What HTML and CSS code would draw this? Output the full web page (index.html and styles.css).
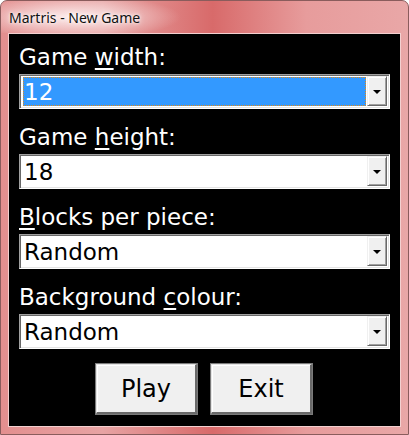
FILE: index.html
```html
<!DOCTYPE html>
<html>
<head>
    <title>Martris - New Game</title>
    <link rel="stylesheet" href="styles.css">
</head>
<body>
    <div class="window">
        <div class="titlebar">
            <span class="title">Martris - New Game</span>
        </div>

        <div class="client">
            <!-- Game width -->
            <div class="field">
                <label class="label">Game <u>w</u>idth:</label>
                <div class="combo focused">
                    <div class="value"><span>12</span></div>
                    <div class="drop"><span class="arrow"></span></div>
                </div>
            </div>

            <!-- Game height -->
            <div class="field">
                <label class="label">Game <u>h</u>eight:</label>
                <div class="combo">
                    <div class="value"><span>18</span></div>
                    <div class="drop"><span class="arrow"></span></div>
                </div>
            </div>

            <!-- Blocks per piece -->
            <div class="field">
                <label class="label"><u>B</u>locks per piece:</label>
                <div class="combo">
                    <div class="value"><span>Random</span></div>
                    <div class="drop"><span class="arrow"></span></div>
                </div>
            </div>

            <!-- Background colour -->
            <div class="field">
                <label class="label">Background <u>c</u>olour:</label>
                <div class="combo">
                    <div class="value"><span>Random</span></div>
                    <div class="drop"><span class="arrow"></span></div>
                </div>
            </div>

            <div class="buttons">
                <button class="btn">Play</button>
                <button class="btn">Exit</button>
            </div>
        </div>
    </div>
</body>
</html>
```

FILE: styles.css
```css
html, body {
    margin: 0;
    padding: 0;
    background: #ffffff;
}

.window {
    width: 409px;
    height: 435px;
    box-sizing: border-box;
    border: 1px solid #8a5c5c;
    border-radius: 7px 7px 0 0;
    background:
        linear-gradient(90deg, #e38f8f 0%, #e7a3a3 25%, #d86a6a 52%, #e79c9c 75%, #e9a7a7 100%);
    padding: 0 7px 7px 7px;
    display: flex;
    flex-direction: column;
}

.titlebar {
    height: 32px;
    display: flex;
    align-items: center;
    background: radial-gradient(ellipse 110px 22px at 70px 16px, rgba(255, 245, 245, 0.9), rgba(255, 240, 240, 0) 100%);
    margin: 0 -7px;
    padding: 0 8px;
}

.title {
    font-family: 'Noto Sans', sans-serif;
    font-size: 14px;
    color: #111111;
    text-shadow: 0 0 6px #ffffff, 0 0 3px #ffffff;
}

.client {
    flex: 1;
    background: #000000;
    border: 1px solid #f3d0d0;
    padding: 8px 10px 0 10px;
    display: flex;
    flex-direction: column;
}

.field {
    display: flex;
    flex-direction: column;
    margin-bottom: 13px;
}

.label {
    font-family: 'DejaVu Sans', sans-serif;
    font-size: 23px;
    line-height: 30px;
    color: #ffffff;
    height: 30px;
    margin-bottom: 2px;
}

.label u {
    text-underline-offset: 3px;
}

.combo {
    height: 35px;
    box-sizing: border-box;
    border-top: 1px solid #a0a0a0;
    border-left: 1px solid #a0a0a0;
    border-right: 1px solid #ffffff;
    border-bottom: 1px solid #ffffff;
    box-shadow: inset 1px 1px 0 #696969, inset -1px -1px 0 #e3e3e3;
    background: #ffffff;
    display: flex;
    padding: 1px 2px 2px 2px;
}

.value {
    flex: 1;
    display: flex;
    align-items: center;
    padding-left: 1px;
    font-family: 'DejaVu Sans', sans-serif;
    font-size: 23px;
    color: #000000;
    margin: 1px 1px 0 1px;
}

.focused .value {
    background: #3399ff;
    color: #ffffff;
    outline: 1px dotted #e08a1a;
    outline-offset: -1px;
}

.drop {
    width: 20px;
    box-sizing: border-box;
    background: #f0f0f0;
    border-top: 1px solid #f0f0f0;
    border-left: 1px solid #f0f0f0;
    border-right: 1px solid #696969;
    border-bottom: 1px solid #696969;
    box-shadow: inset 1px 1px 0 #ffffff, inset -1px -1px 0 #a0a0a0;
    display: flex;
    align-items: center;
    justify-content: center;
}

.arrow {
    width: 0;
    height: 0;
    border-left: 4px solid transparent;
    border-right: 4px solid transparent;
    border-top: 4px solid #000000;
    margin-top: 1px;
}

.buttons {
    display: flex;
    justify-content: center;
    gap: 14px;
    margin-top: 2px;
    padding-right: 1px;
}

.btn {
    width: 101px;
    height: 50px;
    box-sizing: border-box;
    background: #f0f0f0;
    border-top: 1px solid #e3e3e3;
    border-left: 1px solid #e3e3e3;
    border-right: 2px solid #696969;
    border-bottom: 2px solid #696969;
    box-shadow: inset 1px 1px 0 #ffffff, 0 0 0 1px #7a7a7a;
    font-family: 'DejaVu Sans', sans-serif;
    font-size: 24px;
    color: #000000;
    padding: 0;
}
```
